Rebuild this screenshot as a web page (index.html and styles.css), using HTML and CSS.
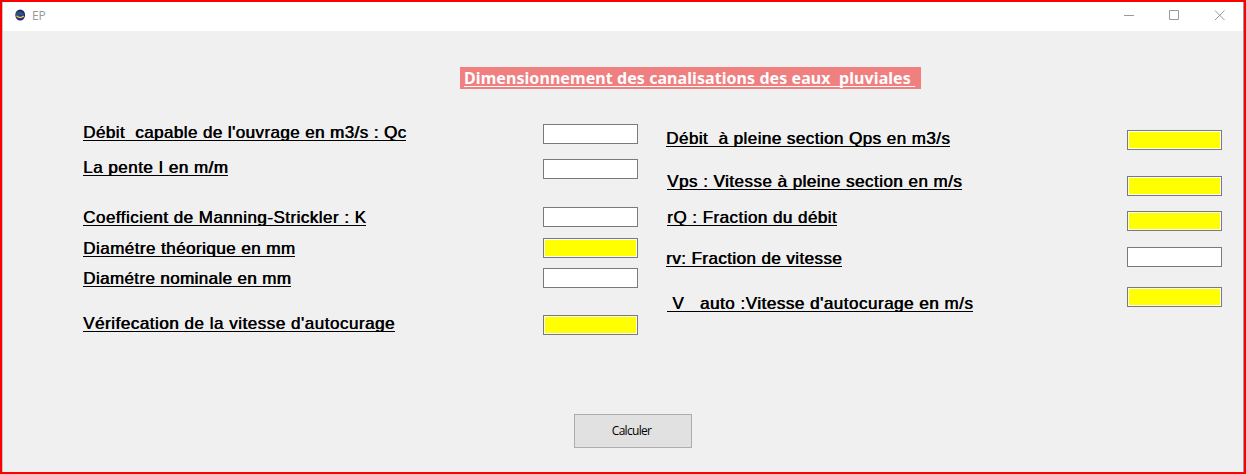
FILE: index.html
```html
<!DOCTYPE html>
<html lang="fr">
<head>
<meta charset="utf-8">
<title>EP</title>
<link rel="stylesheet" href="styles.css">
</head>
<body>
<div class="window">
  <header class="titlebar">
    <svg class="app-icon" width="12" height="12" viewBox="0 0 12 12"><ellipse cx="6.200" cy="6" rx="4.9" ry="5.6" fill="#292676"/><path d="M2.2 3.7Q6 1.8 9.5 4.2V6.500H2.2z" fill="#28567c"/><path d="M2.500 6.8Q6 10.200 9.900 6.9" fill="none" stroke="#e2cd58" stroke-width="1.3"/></svg>
    <span class="caption">EP</span>
    <svg class="controls" width="102" height="11" viewBox="0 0 102 11" fill="none" stroke="#999"><path d="M0 5.5h10M45.500 .5h9v9h-9zM91 .5l9.500 9.500M100.500 .5L91 10"/></svg>
  </header>
  <main class="form">
    <h1 class="heading">Dimensionnement des canalisations des eaux  pluviales </h1>
    <div class="columns">
      <div class="stack">
        <label class="label qc">Débit  capable de l'ouvrage en m3/s : Qc</label>
        <label class="label slope">La pente I en m/m</label>
        <label class="label manning">Coefficient de Manning-Strickler : K</label>
        <label class="label theoretical">Diamétre théorique en mm</label>
        <label class="label nominal">Diamétre nominale en mm</label>
        <label class="label check">Vérifecation de la vitesse d'autocurage</label>
      </div>
      <div class="stack">
        <input class="field f-qc">
        <input class="field f-slope">
        <input class="field f-manning">
        <input class="field result f-theoretical" readonly>
        <input class="field f-nominal">
        <input class="field result f-check" readonly>
      </div>
      <div class="stack">
        <label class="label qps">Débit  à pleine section Qps en m3/s</label>
        <label class="label vps">Vps : Vitesse à pleine section en m/s</label>
        <label class="label rq">rQ : Fraction du débit</label>
        <label class="label rv">rv: Fraction de vitesse</label>
        <label class="label vauto"> V   auto :Vitesse d'autocurage en m/s</label>
      </div>
      <div class="stack">
        <input class="field result f-qps" readonly>
        <input class="field result f-vps" readonly>
        <input class="field result f-rq" readonly>
        <input class="field f-rv">
        <input class="field result f-vauto" readonly>
      </div>
    </div>
    <button class="calculate">Calculer</button>
  </main>
</div>
</body>
</html>
```
FILE: styles.css
```css
* { box-sizing: border-box; }
body { margin: 0; background: #f00; }
.window {
  width: 1246px; height: 474px;
  border: 2px solid #f00;
  background: #f0f0f0;
  box-shadow: inset 1px 0 #c4c4c4, inset -1px 0 #999;
  display: flex; flex-direction: column;
}
.titlebar {
  height: 29px; margin: 0 1px; padding: 0 17px 3px 11px;
  background: #fff; display: flex; align-items: center;
}
.app-icon { flex: none; }
.caption {
  margin: 2px 0 0 6px; color: #999;
  font: 12px/16px "Open Sans", "Noto Sans", sans-serif;
  letter-spacing: -.2px;
}
.controls { margin-left: auto; }
.form { flex: 1; display: flex; flex-direction: column; }
.heading {
  margin: 36px 0 0 458px; width: 461px; height: 22px;
  padding: 1px 0 0 4px;
  background: #f08080; color: #fff; white-space: pre;
  font: bold 16px/20px "Noto Sans", sans-serif;
  letter-spacing: .07px;
  text-decoration: underline 1px; text-underline-offset: 2px;
  text-decoration-skip-ink: none;
}
.columns {
  display: grid; height: 246px; padding: 33px 0 0 81px;
  grid-template-columns: 460px 123px 461px 95px;
}
.stack { display: flex; flex-direction: column; align-items: flex-start; }
.label {
  height: 19px; border-bottom: 1px solid #000;
  white-space: pre; color: #000;
  font: 17px/22px "Liberation Sans", Arial, sans-serif;
  letter-spacing: .42px;
  text-shadow: .6px 0 #000;
}
.slope { margin-top: 16px; letter-spacing: .48px; }
.manning { margin-top: 31px; letter-spacing: .475px; }
.theoretical { margin-top: 12px; letter-spacing: .46px; }
.nominal { margin-top: 11px; letter-spacing: .38px; }
.check { margin-top: 26px; letter-spacing: .52px; }
.qps { margin-top: 6px; letter-spacing: .45px; }
.vps { margin-top: 24px; margin-left: 1px; letter-spacing: .475px; }
.rq { margin-top: 17px; margin-left: 1px; letter-spacing: .465px; }
.rv { margin-top: 22px; }
.vauto { margin-top: 26px; margin-left: 1px; letter-spacing: .52px; }
.field {
  width: 95px; height: 20px; padding: 0 2px; flex: none;
  border: 1px solid #7a7a7a; border-radius: 0; background: #fff; outline: 0;
}
.result { background: #ff0; box-shadow: inset 0 0 0 1px #fff; }
.f-qc { margin-top: 2px; }
.f-slope { margin-top: 15px; }
.f-manning { margin-top: 28px; }
.f-theoretical { margin-top: 11px; }
.f-nominal { margin-top: 10px; }
.f-check { margin-top: 27px; }
.f-qps { margin-top: 8px; }
.f-vps { margin-top: 26px; }
.f-rq { margin-top: 15px; }
.f-rv { margin-top: 16px; }
.f-vauto { margin-top: 20px; }
.calculate {
  width: 118px; height: 34px; margin: 79px 0 0 572px; padding: 0 3px 0 0;
  border: 1px solid #adadad; border-radius: 0; background: #e1e1e1;
  color: #000; font: 12px/16px "Open Sans", "Noto Sans", sans-serif;
  letter-spacing: -.7px;
}
```
